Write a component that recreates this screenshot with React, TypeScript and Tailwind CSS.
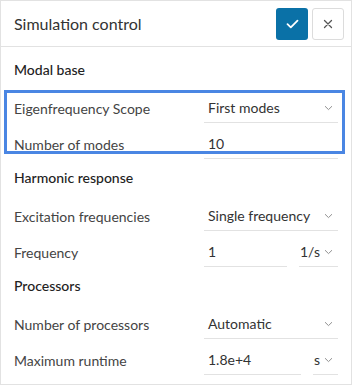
import React from "react";

const Chevron = () => (
  <svg width="9" height="6" viewBox="0 0 9 6" className="shrink-0">
    <path d="M1 1.2 L4.5 4.6 L8 1.2" fill="none" stroke="#909090" strokeWidth="1" />
  </svg>
);

const SectionTitle = ({ children }: { children: React.ReactNode }) => (
  <div className="h-[36px] flex items-end pb-[7px] pl-[13px]">
    <span className="text-[14px] leading-[20px] text-[#222] font-medium">{children}</span>
  </div>
);

const Label = ({ children }: { children: React.ReactNode }) => (
  <div className="w-[190px] h-[30px] flex items-center text-[14px] text-[#444]">{children}</div>
);

const SelectRow = ({ label, value }: { label: string; value: string }) => (
  <div className="h-[36px] flex items-end pl-[13px] pr-[13px]">
    <Label>{label}</Label>
    <div className="flex-1 h-[30px] flex items-center justify-between pl-[4px] pr-[5px] border-b border-[#e2e2e2] text-[14px] text-[#333]">
      <span>{value}</span>
      <Chevron />
    </div>
  </div>
);

const InputRow = ({ label, value }: { label: string; value: string }) => (
  <div className="h-[36px] flex items-end pl-[13px] pr-[13px]">
    <Label>{label}</Label>
    <div className="flex-1 h-[30px] flex items-center pl-[4px] border-b border-[#e2e2e2] text-[14px] text-[#333]">
      <span>{value}</span>
    </div>
  </div>
);

const UnitRow = ({ label, value, unit }: { label: string; value: string; unit: string }) => (
  <div className="h-[36px] flex items-end pl-[13px] pr-[13px]">
    <Label>{label}</Label>
    <div className="flex-1 flex items-end gap-[12px]">
      <div className="flex-1 h-[30px] flex items-center pl-[4px] border-b border-[#e2e2e2] text-[14px] text-[#333]">
        <span>{value}</span>
      </div>
      <div className="h-[30px] flex items-center gap-[4px] pl-[1px] pr-[5px] border-b border-[#e2e2e2] text-[14px] text-[#333]">
        <span>{unit}</span>
        <Chevron />
      </div>
    </div>
  </div>
);

export default function App() {
  return (
    <div
      className="w-[352px] h-[385px] bg-white border border-[#e2e2e2] overflow-hidden"
      style={{ fontFamily: "Lato, 'Open Sans', sans-serif" }}
    >
      <div className="h-[46px] flex items-center justify-between pl-[13px] pr-[7px] border-b border-[#e2e2e2]">
        <span className="text-[16px] text-[#333]">Simulation control</span>
        <div className="flex items-center gap-[4px]">
          <button className="w-[32px] h-[32px] rounded-[3px] bg-[#0a71a7] flex items-center justify-center">
            <svg width="13" height="10" viewBox="0 0 13 10">
              <path d="M1.5 5.2 L4.8 8.3 L11.5 1.7" fill="none" stroke="white" strokeWidth="1.8" strokeLinecap="round" strokeLinejoin="round" />
            </svg>
          </button>
          <button className="w-[32px] h-[32px] rounded-[3px] bg-white border border-[#dcdcdc] flex items-center justify-center">
            <svg width="10" height="10" viewBox="0 0 10 10">
              <path d="M1.5 1.5 L8.5 8.5 M8.5 1.5 L1.5 8.5" fill="none" stroke="#555" strokeWidth="1.3" strokeLinecap="round" />
            </svg>
          </button>
        </div>
      </div>
      <div className="pt-[4px]">
        <SectionTitle>Modal base</SectionTitle>
        <div className="relative">
          <SelectRow label="Eigenfrequency Scope" value="First modes" />
          <InputRow label="Number of modes" value="10" />
          <div className="absolute left-[3px] top-[3px] w-[341px] h-[64px] border-[3px] border-[#4a86e3] pointer-events-none" />
        </div>
        <SectionTitle>Harmonic response</SectionTitle>
        <SelectRow label="Excitation frequencies" value="Single frequency" />
        <UnitRow label="Frequency" value="1" unit="1/s" />
        <SectionTitle>Processors</SectionTitle>
        <SelectRow label="Number of processors" value="Automatic" />
        <UnitRow label="Maximum runtime" value="1.8e+4" unit="s" />
      </div>
    </div>
  );
}
